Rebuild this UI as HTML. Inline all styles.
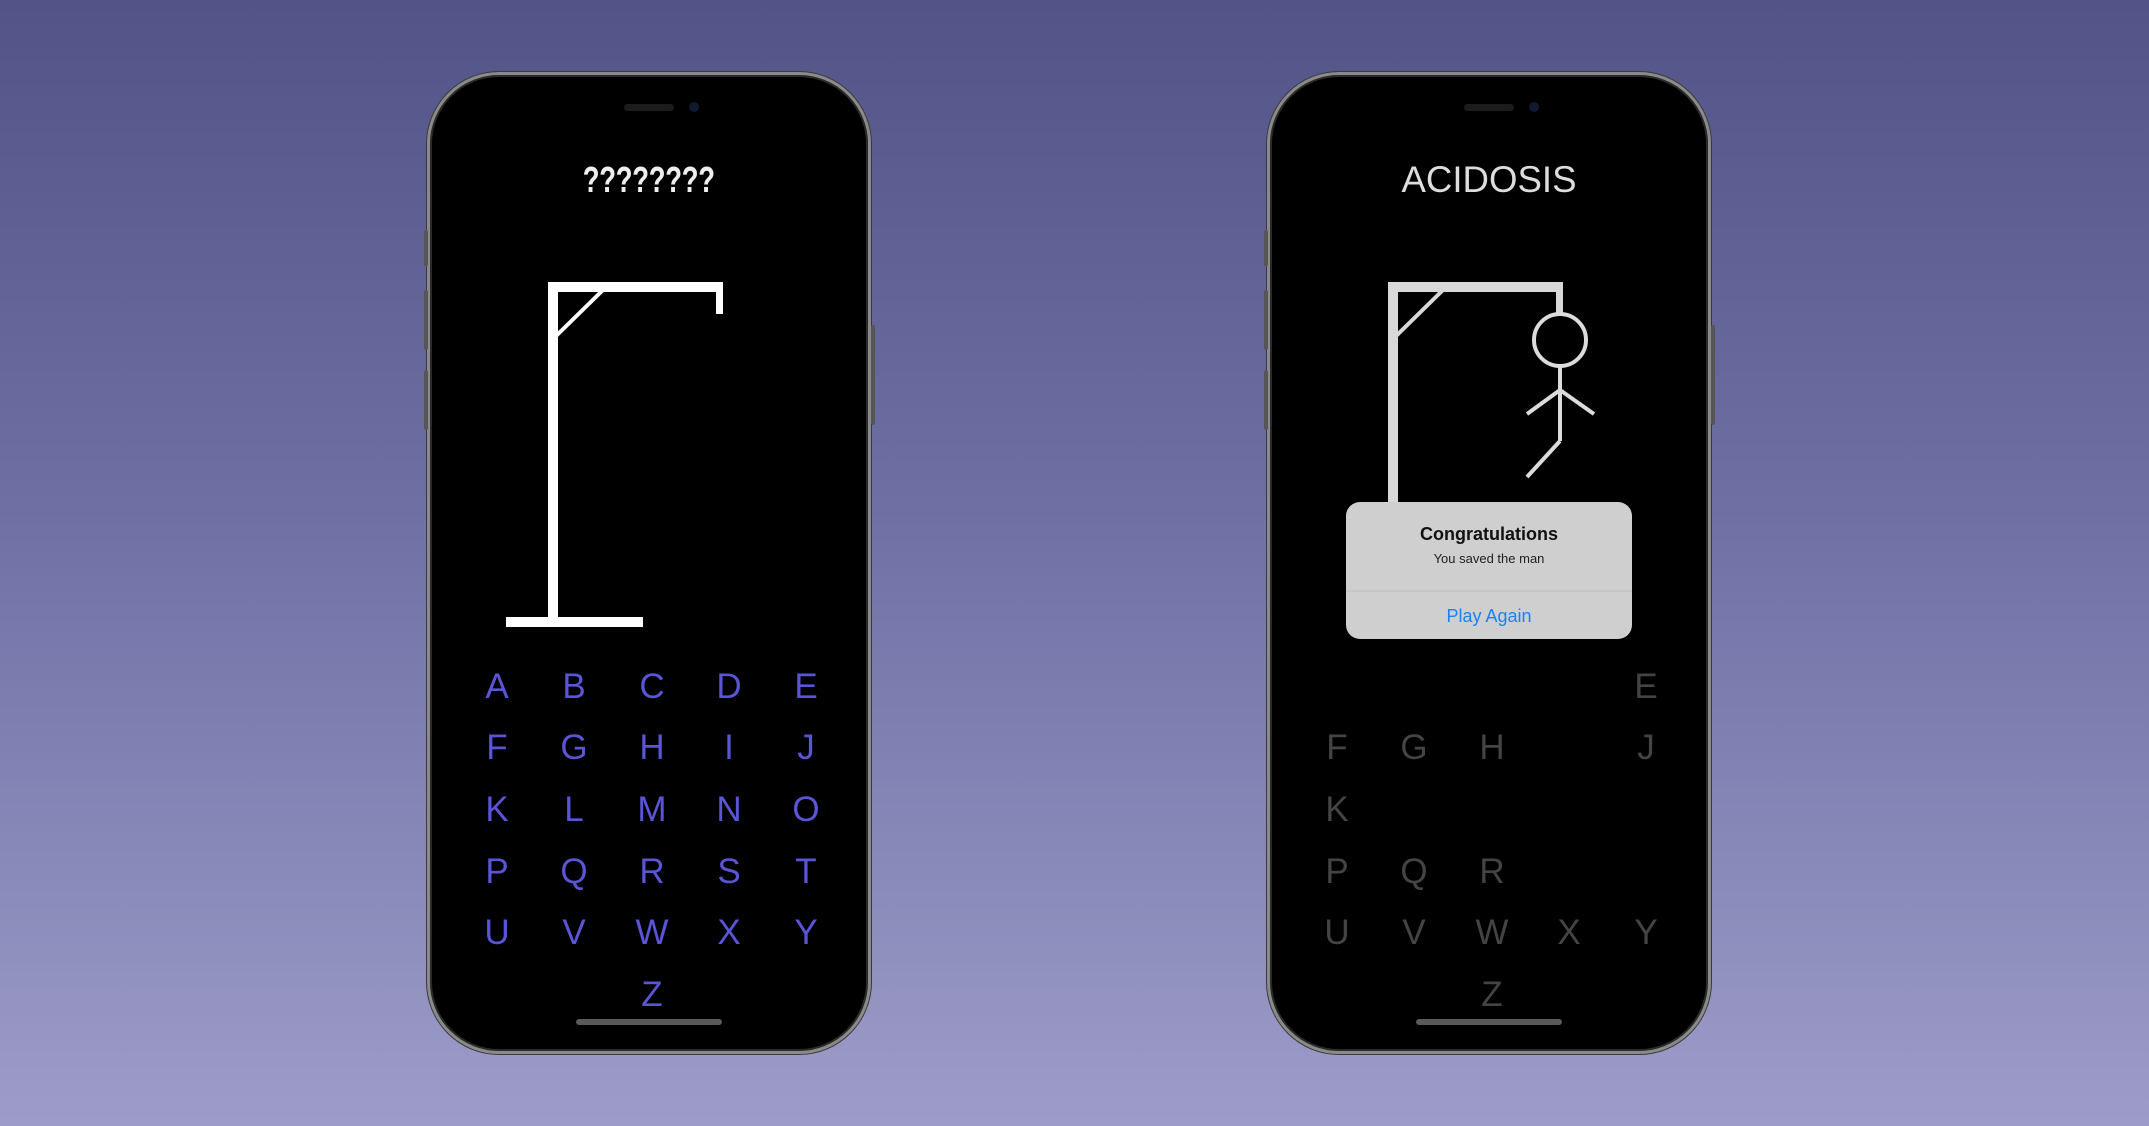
<!DOCTYPE html>
<html><head><meta charset="utf-8"><style>
html,body{margin:0;padding:0}
body{width:2149px;height:1126px;overflow:hidden;background:linear-gradient(180deg,#525488 0%,#6e70a4 45%,#9d9cc9 100%);position:relative;font-family:"Liberation Sans",sans-serif}
.phone{position:absolute;top:72px;width:438px;height:976px;border-radius:72px;background:#000;border:3px solid #8a8a8a;box-shadow:0 0 0 1px #3a3a3a,inset 0 0 0 2px #2a2a2a}
.btn{position:absolute;width:4px;background:#555;border-radius:2px}
svg{position:absolute;left:0;top:0}
</style></head><body>

<div class="phone" style="left:427px"></div>
<div class="phone" style="left:1267px"></div>
<div class="btn" style="left:424px;top:230px;height:36px"></div>
<div class="btn" style="left:424px;top:290px;height:60px"></div>
<div class="btn" style="left:424px;top:370px;height:60px"></div>
<div class="btn" style="left:871px;top:325px;height:100px"></div>
<div class="btn" style="left:1264px;top:230px;height:36px"></div>
<div class="btn" style="left:1264px;top:290px;height:60px"></div>
<div class="btn" style="left:1264px;top:370px;height:60px"></div>
<div class="btn" style="left:1711px;top:325px;height:100px"></div>

<svg width="2149" height="1126" viewBox="0 0 2149 1126">
<!-- phone 1 -->
<rect x="624" y="104" width="50" height="7" rx="3.5" fill="#1c1c1c"/>
<circle cx="694" cy="107" r="5" fill="#111a30"/>
<text x="649" y="192" font-family="Liberation Mono, monospace" font-size="38" font-weight="bold" fill="#eee" text-anchor="middle" textLength="132" lengthAdjust="spacingAndGlyphs">????????</text>
<g fill="#fff">
<rect x="548" y="282" width="10" height="344"/>
<rect x="548" y="282" width="175" height="10"/>
<rect x="716" y="282" width="7" height="32"/>
<rect x="506" y="617" width="137" height="10"/>
</g>
<line x1="604" y1="289" x2="555" y2="337" stroke="#fff" stroke-width="4"/>
<g font-size="35" fill="#5a55d6" text-anchor="middle">
<text x="497" y="698">A</text><text x="574" y="698">B</text><text x="652" y="698">C</text><text x="729" y="698">D</text><text x="806" y="698">E</text>
<text x="497" y="759">F</text><text x="574" y="759">G</text><text x="652" y="759">H</text><text x="729" y="759">I</text><text x="806" y="759">J</text>
<text x="497" y="821">K</text><text x="574" y="821">L</text><text x="652" y="821">M</text><text x="729" y="821">N</text><text x="806" y="821">O</text>
<text x="497" y="883">P</text><text x="574" y="883">Q</text><text x="652" y="883">R</text><text x="729" y="883">S</text><text x="806" y="883">T</text>
<text x="497" y="944">U</text><text x="574" y="944">V</text><text x="652" y="944">W</text><text x="729" y="944">X</text><text x="806" y="944">Y</text>
<text x="652" y="1006">Z</text>
</g>
<rect x="576" y="1019" width="146" height="6" rx="3" fill="#5a5a5a"/>

<!-- phone 2 -->
<rect x="1464" y="104" width="50" height="7" rx="3.5" fill="#1c1c1c"/>
<circle cx="1534" cy="107" r="5" fill="#111a30"/>
<text x="1489" y="192" font-family="Liberation Sans, sans-serif" font-size="37" fill="#ddd" text-anchor="middle" textLength="175" lengthAdjust="spacingAndGlyphs">ACIDOSIS</text>
<g fill="#d8d8d8">
<rect x="1388" y="282" width="10" height="222"/>
<rect x="1388" y="282" width="175" height="10"/>
<rect x="1556" y="282" width="7" height="32"/>
</g>
<line x1="1444" y1="289" x2="1395" y2="337" stroke="#d8d8d8" stroke-width="4"/>
<g stroke="#dcdcdc" stroke-width="4" fill="none">
<circle cx="1560" cy="340" r="26"/>
<line x1="1560" y1="366" x2="1560" y2="441"/>
<line x1="1560" y1="390" x2="1527" y2="414"/>
<line x1="1560" y1="390" x2="1594" y2="414"/>
<line x1="1560" y1="441" x2="1527" y2="477"/>
</g>
<g font-size="35" fill="#444" text-anchor="middle">
<text x="1646" y="698">E</text>
<text x="1337" y="759">F</text><text x="1414" y="759">G</text><text x="1492" y="759">H</text><text x="1646" y="759">J</text>
<text x="1337" y="821">K</text>
<text x="1337" y="883">P</text><text x="1414" y="883">Q</text><text x="1492" y="883">R</text>
<text x="1337" y="944">U</text><text x="1414" y="944">V</text><text x="1492" y="944">W</text><text x="1569" y="944">X</text><text x="1646" y="944">Y</text>
<text x="1492" y="1006">Z</text>
</g>
<rect x="1416" y="1019" width="146" height="6" rx="3" fill="#5a5a5a"/>

<!-- alert -->
<rect x="1346" y="502" width="286" height="137" rx="14" fill="#cfcfcf"/>
<line x1="1346" y1="591" x2="1632" y2="591" stroke="#bdbdbd" stroke-width="1"/>
<text x="1489" y="540" font-size="18" font-weight="bold" fill="#111" text-anchor="middle">Congratulations</text>
<text x="1489" y="563" font-size="13" fill="#222" text-anchor="middle">You saved the man</text>
<text x="1489" y="622" font-size="18" fill="#1a82f5" text-anchor="middle">Play Again</text>
</svg>
</body></html>
